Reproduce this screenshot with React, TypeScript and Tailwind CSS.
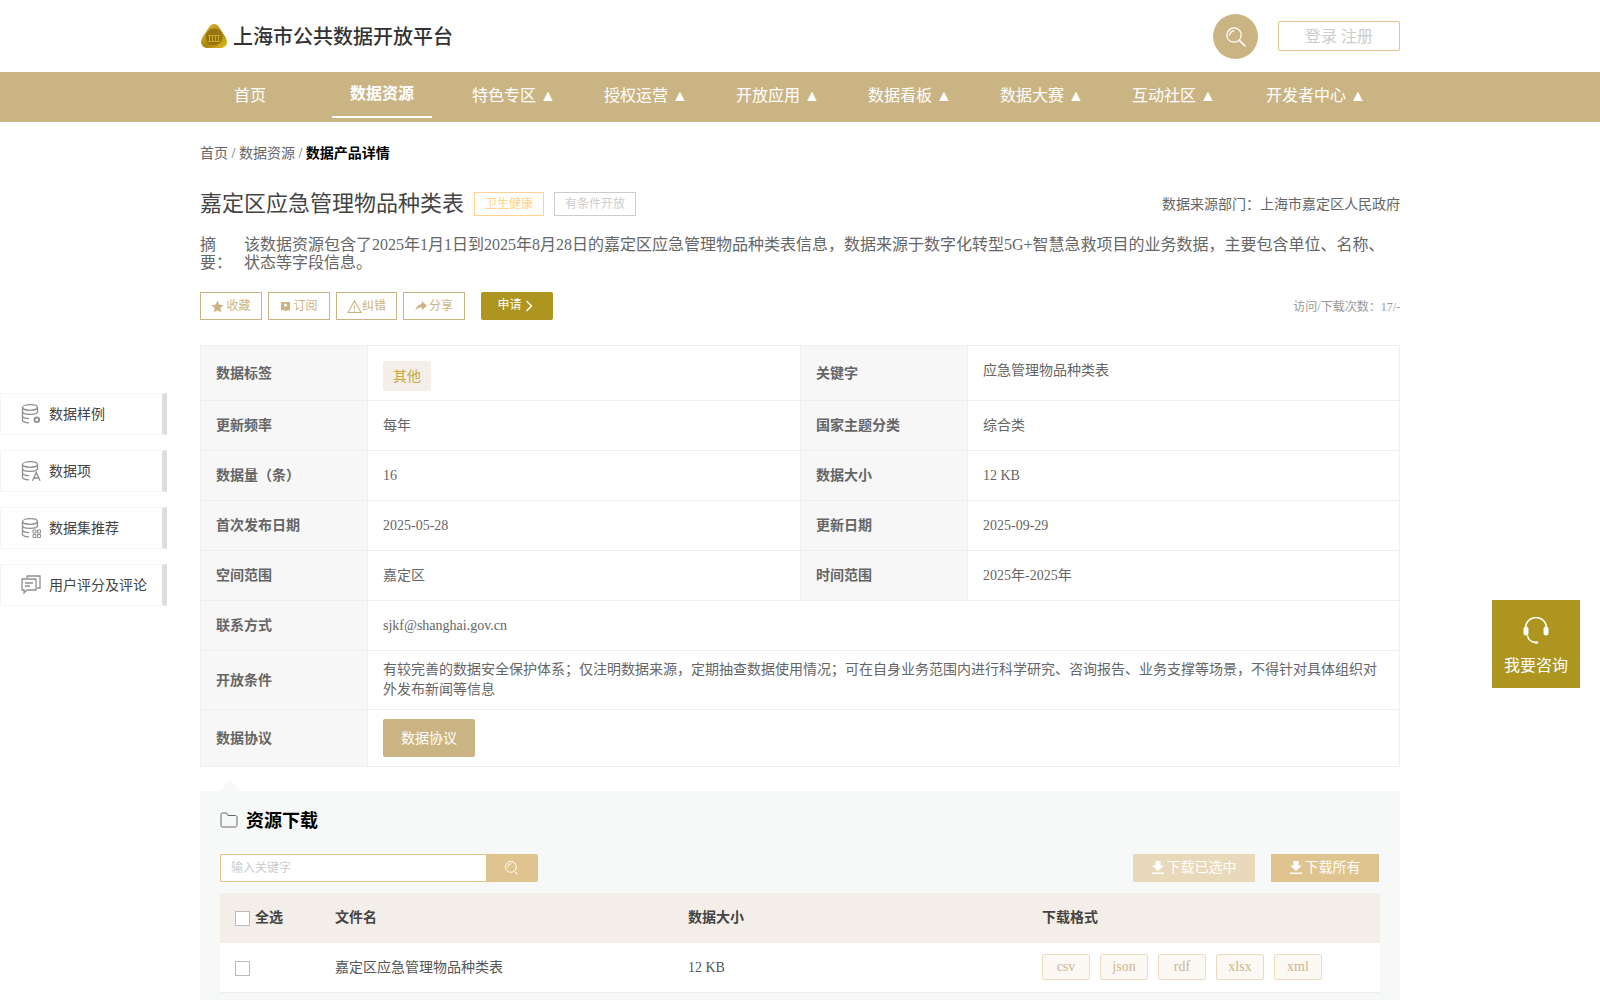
import type { ReactNode } from 'react'

const NAV_ITEMS = ['首页', '数据资源', '特色专区 ▲', '授权运营 ▲', '开放应用 ▲', '数据看板 ▲', '数据大赛 ▲', '互动社区 ▲']
const FORMATS = ['csv', 'json', 'rdf', 'xlsx', 'xml']

function Logo() {
  return (
    <svg viewBox="0 0 28 26" className="h-[26px] w-[28px]">
      <defs>
        <linearGradient id="gold" x1="0" y1="0" x2="1" y2="1">
          <stop offset="0" stopColor="#e8cf3a" />
          <stop offset="0.55" stopColor="#a8820f" />
          <stop offset="1" stopColor="#e3c21e" />
        </linearGradient>
      </defs>
      <path d="M14 1c3 0 4.500 2 6.500 5.500C23 10.500 27 15 27 19c0 4-3.500 6-7 6H8c-3.500 0-7-2-7-6 0-4 4-8.500 6.500-12.500C9.500 3 11 1 14 1z" fill="url(#gold)" />
      <circle cx="14" cy="14" r="8.500" fill="#96740f" />
      <path d="M8 18.500h12M9.500 13v5M12.500 13v5M15.500 13v5M18.500 13v5M8 12.500h12" stroke="#c9a825" strokeWidth="1" fill="none" />
    </svg>
  )
}

function SearchGlass({ className, tail }: { className?: string; tail: string }) {
  return (
    <svg viewBox="0 0 22 22" className={className} fill="none" stroke="currentColor" strokeWidth="1.300" strokeLinecap="round">
      <circle cx="9.500" cy="9.500" r="7.500" />
      <path d="M5 9.500a4.500 4.500 0 0 1 4.500-4.500" />
      <path d={tail} strokeWidth="1.700" />
    </svg>
  )
}

function DownloadIcon() {
  return (
    <svg viewBox="0 0 12 13" className="h-[13px] w-[12px] fill-white">
      <path d="M3.500 0h5v4.500H12L6 10 0 4.500h3.500zM0 11.500h12V13H0z" />
    </svg>
  )
}

/* the three database glyphs differ only by the badge in the lower right corner */
function DbIcon({ badge }: { badge: ReactNode }) {
  return (
    <svg viewBox="0 0 20 20" className="h-[20px] w-[20px] shrink-0" fill="none" stroke="#8f8f8f" strokeWidth="1.300">
      <ellipse cx="9" cy="3.500" rx="7.500" ry="2.800" />
      <path d="M1.500 3.500v12.500c0 1.500 2.500 2.800 6.500 2.800M16.500 3.500v5.500M1.500 7.500c0 1.600 3.300 2.900 7.500 2.900s7.500-1.300 7.500-2.900M1.500 11.800c0 1.500 2.700 2.700 6.500 2.800" />
      {badge}
    </svg>
  )
}

function CommentIcon() {
  return (
    <svg viewBox="0 0 20 20" className="h-[20px] w-[20px] shrink-0" fill="none" stroke="#8f8f8f" strokeWidth="1.300">
      <path d="M6 3V1h13v12h-3" />
      <path d="M1 4h14v11H6l-3 3v-3H1zM4 8h8M4 11h5" />
    </svg>
  )
}

const SIDE_ITEMS: Array<{ label: string; icon: ReactNode }> = [
  {
    label: '数据样例',
    icon: <DbIcon badge={<circle cx="15.800" cy="15.800" r="2.400" strokeWidth="1.800" />} />,
  },
  {
    label: '数据项',
    icon: <DbIcon badge={<path d="M11.500 19.800l3.800-8.300 3.800 8.300M12.800 17h5" />} />,
  },
  {
    label: '数据集推荐',
    icon: (
      <DbIcon
        badge={
          <path d="M12 12h3v3h-3zM16.500 12h3v3h-3zM12 16.500h3v3h-3zM16.500 16.500h3v3h-3z" strokeWidth="1" />
        }
      />
    ),
  },
  { label: '用户评分及评论', icon: <CommentIcon /> },
]

function ActionButton({ icon, label, width }: { icon: ReactNode; label: string; width: string }) {
  return (
    <button className={`flex h-[28px] items-center justify-center border border-[#cbb484] text-[12px] text-[#cbb484] ${width}`}>
      {icon}
      {label}
    </button>
  )
}

function Label({ children, className }: { children: ReactNode; className: string }) {
  return (
    <div className={`flex items-center border-b border-r border-[#eeeeee] bg-[#f7f7f7] pl-[15px] text-[14px] font-bold text-[#666666] ${className}`}>
      {children}
    </div>
  )
}

function Value({ children, className }: { children: ReactNode; className: string }) {
  return (
    <div className={`flex items-center border-b border-[#eeeeee] pl-[15px] pr-[20px] text-[14px] text-[#666666] ${className}`}>
      {children}
    </div>
  )
}

export default function App() {
  return (
    <div className="relative h-[1000px] overflow-hidden bg-white font-['Liberation_Serif','Noto_Sans_CJK_SC',serif] text-[#666666]">
      <header className="mx-auto flex h-[72px] w-[1200px] items-center">
        <Logo />
        <h1 className="ml-[5px] mt-[1px] text-[20px] font-medium text-[#333333]">上海市公共数据开放平台</h1>
        <button className="ml-auto flex h-[45px] w-[45px] items-center justify-center rounded-full bg-[#cbb484] text-white">
          <SearchGlass className="h-[21px] w-[21px]" tail="M15 15L21 21" />
        </button>
        <button className="ml-[20px] h-[30px] w-[122px] rounded-[2px] border border-[#e0c48f] pt-[1px] text-[16px] text-[#cccccc]">
          登录 注册
        </button>
      </header>

      <nav className="h-[50px] bg-[#cbb484]">
        <div className="mx-auto flex w-[1200px] gap-[32px]">
          {NAV_ITEMS.map((item) => (
            <a
              key={item}
              className={
                item === '数据资源'
                  ? 'flex h-[46px] w-[100px] shrink-0 items-center justify-center border-b-2 border-white text-[16px] font-bold text-white'
                  : 'flex h-[48px] w-[100px] shrink-0 items-center justify-center whitespace-nowrap text-[16px] text-white'
              }
            >
              {item}
            </a>
          ))}
          <a className="flex h-[48px] w-[120px] shrink-0 items-center justify-center whitespace-nowrap text-[16px] text-white">
            开发者中心 ▲
          </a>
        </div>
      </nav>

      <main className="mx-auto w-[1200px]">
        <div className="mt-[23px] h-[18px] text-[14px] leading-[18px] text-[#666666]">
          首页 / 数据资源 / <span className="font-bold text-black">数据产品详情</span>
        </div>

        <div className="mt-[29px] flex h-[24px] items-center">
          <h2 className="-mt-[2px] text-[22px] text-[#444444]">嘉定区应急管理物品种类表</h2>
          <span className="ml-[10px] flex h-[24px] w-[70px] items-center justify-center border border-[#ffd28e] text-[12px] text-[#ffd28e]">
            卫生健康
          </span>
          <span className="ml-[10px] flex h-[24px] w-[82px] items-center justify-center border border-[#cccccc] text-[12px] text-[#cccccc]">
            有条件开放
          </span>
          <span className="ml-auto text-[14px] text-[#666666]">数据来源部门：上海市嘉定区人民政府</span>
        </div>

        <div className="mt-[20px] flex text-[16px] leading-[18px] text-[#666666]">
          <div className="w-[44px] shrink-0 pr-[14px]">摘 要：</div>
          <p>
            该数据资源包含了2025年1月1日到2025年8月28日的嘉定区应急管理物品种类表信息，数据来源于数字化转型5G+智慧急救项目的业务数据，主要包含单位、名称、状态等字段信息。
          </p>
        </div>

        <div className="mt-[20px] flex h-[28px] items-center gap-[6px]">
          <ActionButton
            width="w-[62px]"
            label="收藏"
            icon={
              <svg viewBox="0 0 24 24" className="mr-[2px] h-[13px] w-[13px] fill-[#cbb484]">
                <path d="M12 1.500l3.300 7 7.700 1-5.600 5.300 1.400 7.700-6.800-3.700-6.800 3.700 1.400-7.700L1 9.500l7.700-1z" />
              </svg>
            }
          />
          <ActionButton
            width="w-[62px]"
            label="订阅"
            icon={
              <svg viewBox="0 0 12 12" className="mr-[2px] h-[11px] w-[11px] fill-[#cbb484]">
                <path fillRule="evenodd" d="M1 1h10v9H7.500L6 11.500 4.500 10H1zM6 3a1.600 1.600 0 1 0 0 3.200A1.600 1.600 0 0 0 6 3z" />
              </svg>
            }
          />
          <ActionButton
            width="w-[61px]"
            label="纠错"
            icon={
              <svg viewBox="0 0 16 16" className="h-[15px] w-[15px]" fill="none" stroke="#cbb484" strokeWidth="1.100">
                <path d="M8 2l7 12.500H1zM8 6.500v4.500M8 12v1.200" />
              </svg>
            }
          />
          <ActionButton
            width="w-[62px]"
            label="分享"
            icon={
              <svg viewBox="0 0 14 12" className="mr-[2px] h-[11px] w-[12px] fill-[#cbb484]">
                <path d="M8 0l6 5-6 5V7C5 7 2.500 8 .5 11 1 6.500 4 3.500 8 3z" />
              </svg>
            }
          />
          <button className="ml-[10px] flex h-[28px] w-[72px] items-center justify-center gap-[3px] rounded-[2px] bg-[#ae9520] pr-[4px] text-[12px] text-white">
            <span className="-mt-[3px]">申请</span>
            <svg viewBox="0 0 8 12" className="h-[12px] w-[8px]" fill="none" stroke="white" strokeWidth="1.400">
              <path d="M1.500 1l5 5-5 5" />
            </svg>
          </button>
          <span className="ml-auto mt-[2px] text-[12px] text-[#999999]">访问/下载次数：17/-</span>
        </div>

        <div className="mt-[25px] grid grid-cols-[167px_433px_167px_1fr] border border-[#eeeeee]">
          <Label className="h-[55px]">数据标签</Label>
          <Value className="h-[55px] border-r">
            <span className="mt-[6px] flex h-[30px] w-[48px] items-center justify-center rounded-[3px] bg-[#f3eee7] text-[#c7a93c]">
              其他
            </span>
          </Value>
          <Label className="h-[55px]">关键字</Label>
          <Value className="h-[55px] pb-[5px]">应急管理物品种类表</Value>

          <Label className="h-[50px]">更新频率</Label>
          <Value className="h-[50px] border-r">每年</Value>
          <Label className="h-[50px]">国家主题分类</Label>
          <Value className="h-[50px]">综合类</Value>

          <Label className="h-[50px]">数据量（条）</Label>
          <Value className="h-[50px] border-r">16</Value>
          <Label className="h-[50px]">数据大小</Label>
          <Value className="h-[50px]">12 KB</Value>

          <Label className="h-[50px]">首次发布日期</Label>
          <Value className="h-[50px] border-r">2025-05-28</Value>
          <Label className="h-[50px]">更新日期</Label>
          <Value className="h-[50px]">2025-09-29</Value>

          <Label className="h-[50px]">空间范围</Label>
          <Value className="h-[50px] border-r">嘉定区</Value>
          <Label className="h-[50px]">时间范围</Label>
          <Value className="h-[50px]">2025年-2025年</Value>

          <Label className="h-[50px]">联系方式</Label>
          <Value className="col-span-3 h-[50px]">sjkf@shanghai.gov.cn</Value>

          <Label className="h-[59px]">开放条件</Label>
          <Value className="col-span-3 h-[59px] leading-[20px]">
            有较完善的数据安全保护体系；仅注明数据来源，定期抽查数据使用情况；可在自身业务范围内进行科学研究、咨询报告、业务支撑等场景，不得针对具体组织对外发布新闻等信息
          </Value>

          <Label className="h-[56px] border-b-0">数据协议</Label>
          <Value className="col-span-3 h-[56px] border-b-0">
            <button className="h-[38px] w-[92px] rounded-[2px] bg-[#cbb484] text-white">数据协议</button>
          </Value>
        </div>

        <section className="relative mt-[24px] bg-[#f7f9f8] px-[20px] pt-[17px]">
          <svg viewBox="0 0 20 12" className="absolute left-[20px] top-[-12px] h-[12px] w-[20px] fill-[#f7f9f8]">
            <path d="M0 12L10 0l10 12z" />
          </svg>

          <div className="flex h-[24px] items-center gap-[8px]">
            <svg viewBox="0 0 18 16" className="h-[16px] w-[18px]" fill="none" stroke="#666666" strokeWidth="1">
              <path d="M1 13.500V2.500c0-.8.7-1.500 1.500-1.500h4L8 3.500h7.500c.8 0 1.500.7 1.500 1.500v8.500c0 .8-.7 1.500-1.500 1.500h-13C1.700 15 1 14.300 1 13.500z" />
            </svg>
            <h3 className="mt-[2px] text-[18px] font-bold text-black">资源下载</h3>
          </div>

          <div className="mt-[22px] flex h-[28px] items-center">
            <input
              placeholder="输入关键字"
              className="h-[28px] w-[266px] rounded-l-[2px] border border-r-0 border-[#e0c48f] bg-white pl-[10px] pt-[1px] text-[12px] outline-none placeholder:text-[#cccccc]"
            />
            <button className="flex h-[28px] w-[52px] items-center justify-center rounded-r-[2px] bg-[#e0c48f] text-white">
              <SearchGlass className="h-[16px] w-[16px]" tail="M16 17L18 19" />
            </button>
            <button className="ml-auto flex h-[28px] w-[122px] items-center justify-center gap-[3px] bg-[#e9d9bb] pb-[1px] text-[14px] text-white">
              <DownloadIcon />
              下载已选中
            </button>
            <button className="ml-[16px] mr-px flex h-[28px] w-[108px] items-center justify-center gap-[3px] bg-[#e0c48f] pb-[1px] text-[14px] text-white">
              <DownloadIcon />
              下载所有
            </button>
          </div>

          <div className="mt-[11px] flex h-[50px] items-center bg-[#f3eee7] pl-[15px] text-[14px] font-bold text-[#444444]">
            <span className="h-[15px] w-[15px] border border-[#bbbbbb] bg-white" />
            <span className="-mt-[2px] ml-[5px] w-[80px]">全选</span>
            <span className="-mt-[2px] w-[353px]">文件名</span>
            <span className="-mt-[2px] w-[354px]">数据大小</span>
            <span className="-mt-[2px]">下载格式</span>
          </div>

          <div className="flex h-[50px] items-center border-b border-[#f3eee7] bg-white pl-[15px] text-[14px] text-[#555555]">
            <span className="mt-[2px] h-[15px] w-[15px] border border-[#bbbbbb] bg-white" />
            <span className="ml-[85px] w-[353px]">嘉定区应急管理物品种类表</span>
            <span className="w-[354px]">12 KB</span>
            <div className="-mt-[2px] flex gap-[10px]">
              {FORMATS.map((format) => (
                <span
                  key={format}
                  className="flex h-[26px] w-[48px] items-center justify-center rounded-[2px] border border-[#ebdcc0] bg-[#fcf9f5] text-[#d1b48c]"
                >
                  {format}
                </span>
              ))}
            </div>
          </div>
          <div className="h-[60px]" />
        </section>
      </main>

      {/* floating anchors on the left edge */}
      <aside className="absolute left-0 top-[393px] flex w-[167px] flex-col gap-[15px]">
        {SIDE_ITEMS.map((item) => (
          <div
            key={item.label}
            className="flex h-[42px] items-center border border-r-[5px] border-[#f5f5f5] border-r-[#dddddd] bg-white pl-[20px] text-[14px] text-[#444444]"
          >
            {item.icon}
            <span className="ml-[8px] whitespace-nowrap">{item.label}</span>
          </div>
        ))}
      </aside>

      <div className="absolute left-[1492px] top-[600px] flex h-[88px] w-[88px] flex-col items-center bg-[#ae9520] text-[16px] text-white">
        <svg viewBox="0 0 28 28" className="mt-[17px] h-[28px] w-[28px]" fill="none" stroke="white" strokeWidth="1.500">
          <path d="M3.500 14V11a10.500 10.500 0 0 1 21 0v3" />
          <path d="M5.500 18.500c.5 4 4 7 8.500 7" />
          <rect x="1.500" y="9.500" width="5" height="9" rx="2.500" fill="white" stroke="none" />
          <rect x="21.500" y="9.500" width="5" height="9" rx="2.500" fill="white" stroke="none" />
          <circle cx="14.500" cy="25.500" r="1.600" fill="white" stroke="none" />
        </svg>
        <span className="mt-[11px] leading-[20px]">我要咨询</span>
      </div>
    </div>
  )
}
